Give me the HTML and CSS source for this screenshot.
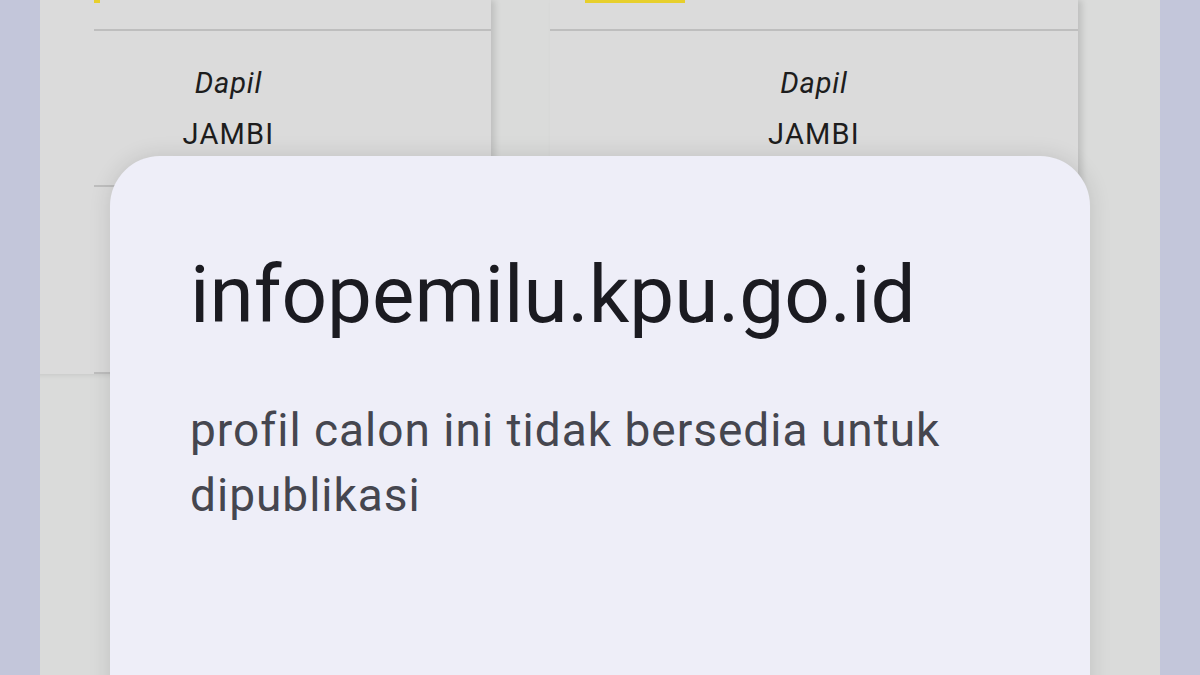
FILE: index.html
```
<!DOCTYPE html>
<html>
<head>
  <title>infopemilu.kpu.go.id</title>
  <link rel="stylesheet" href="styles.css">
</head>
<body>
  <div class="screen">
    <div class="cards">
      <div class="card card-left">
        <div class="row row-top"><span class="tag tag-small"></span></div>
        <div class="row row-info">
          <span class="label">Dapil</span>
          <span class="value">JAMBI</span>
        </div>
        <div class="row row-empty"></div>
      </div>
      <div class="card card-right">
        <div class="row row-top"><span class="tag"></span></div>
        <div class="row row-info">
          <span class="label">Dapil</span>
          <span class="value">JAMBI</span>
        </div>
        <div class="row row-empty"></div>
      </div>
    </div>

    <div class="dialog">
      <h1 class="dialog-title">infopemilu.kpu.go.id</h1>
      <p class="dialog-text">profil calon ini tidak bersedia untuk dipublikasi</p>
    </div>
  </div>
</body>
</html>
```

FILE: styles.css
```
body {
  margin: 0;
  width: 1200px;
  height: 675px;
  overflow: hidden;
  background: #c3c6da;
  font-family: Roboto, "Noto Sans", sans-serif;
}
.screen {
  position: relative;
  margin: 0 40px;
  height: 675px;
  background: #dadbda;
  overflow: hidden;
}
.cards {
  display: flex;
  gap: 59px;
  margin-left: -74px;
}
.card {
  background: #dbdbdb;
  box-shadow: 4px 0 6px rgba(0,0,0,0.12);
}
.card-left {
  width: 525px;
}
.card-right {
  width: 528px;
}
.row {
  border-bottom: 2px solid #bebebe;
  box-sizing: border-box;
}
.card-left .row {
  margin-left: 128px;
}
.card-left .row-info {
  margin-left: 0;
  border-bottom: none;
  position: relative;
}
.card-left .row-info::after {
  content: "";
  position: absolute;
  left: 128px;
  right: 0;
  bottom: 0;
  border-bottom: 2px solid #bebebe;
}
.row-top {
  height: 31px;
  position: relative;
}
.tag {
  position: absolute;
  top: 0;
  left: 35px;
  width: 100px;
  height: 3px;
  background: #e7cf2c;
}
.tag-small {
  left: 0;
  width: 6px;
}
.row-info {
  height: 156px;
  display: flex;
  flex-direction: column;
  align-items: center;
  padding-top: 35px;
}
.label {
  font-style: italic;
  font-size: 29px;
  letter-spacing: 0.8px;
  color: #1d1d1d;
  line-height: 34px;
}
.value {
  font-size: 29px;
  letter-spacing: 1.2px;
  color: #1d1d1d;
  line-height: 34px;
  margin-top: 17px;
}
.row-empty {
  height: 187px;
}
.dialog {
  position: absolute;
  left: 70px;
  top: 156px;
  width: 980px;
  height: 600px;
  box-sizing: border-box;
  padding: 94px 80px 0;
  background: #eeeef8;
  border-radius: 50px;
  box-shadow: 0 0 22px rgba(0,0,0,0.12);
}
.dialog-title {
  margin: 0;
  font-size: 80px;
  font-weight: 400;
  line-height: 90px;
  color: #1b1b21;
}
.dialog-text {
  margin: 58px 0 0;
  font-size: 46px;
  letter-spacing: 1px;
  line-height: 65px;
  color: #45464f;
  width: 800px;
}
```
